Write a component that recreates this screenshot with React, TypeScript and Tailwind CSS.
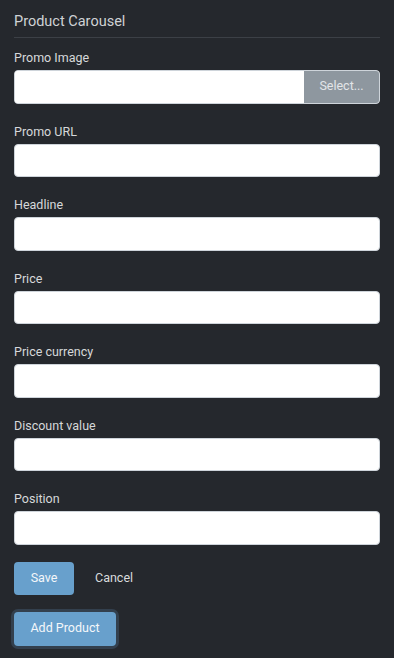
const fields = ['Promo URL', 'Headline', 'Price', 'Price currency', 'Discount value', 'Position'];

export default function App() {
  return (
    <div className="min-h-[658px] w-full bg-[#25282d] px-[14px] pt-[12px] pb-[10px] font-['Roboto',sans-serif] text-[#d6d8da]">
      {/* Header */}
      <div className="border-b border-[#3c4046] pb-[5px]">
        <h2 className="text-[14.5px] leading-[20px] font-normal text-[#cfd2d5]">Product Carousel</h2>
      </div>

      {/* Promo Image */}
      <div className="mt-[11px] flex flex-col gap-[3px]">
        <label className="text-[12.5px] leading-[18px]">Promo Image</label>
        <div className="flex h-[33.5px] w-full overflow-hidden rounded-[4px] border border-[#ced4da] bg-white">
          <input className="min-w-0 flex-1 bg-white px-2 text-[13px] outline-none" />
          <button className="w-[75px] bg-[#8e979f] text-[12.5px] text-[#e2e5e8]">Select...</button>
        </div>
      </div>

      {fields.map((f) => (
        <div key={f} className="mt-[19px] flex flex-col gap-[3px]">
          <label className="text-[12.5px] leading-[18px]">{f}</label>
          <input className="h-[33.5px] w-full rounded-[4px] border border-[#ced4da] bg-white px-2 text-[13px] outline-none" />
        </div>
      ))}

      {/* Actions */}
      <div className="mt-[17px] flex items-center gap-[21px]">
        <button className="h-[33px] w-[60px] rounded-[4px] bg-[#68a0cc] text-[12.5px] text-[#f4f7fa]">Save</button>
        <button className="text-[12.5px] text-[#dadcde]">Cancel</button>
      </div>

      <button className="mt-[17px] h-[34px] w-[102px] rounded-[4px] bg-[#68a0cc] text-[12.5px] text-[#f4f7fa] ring-[3px] ring-[#33404e]">
        Add Product
      </button>
    </div>
  );
}
